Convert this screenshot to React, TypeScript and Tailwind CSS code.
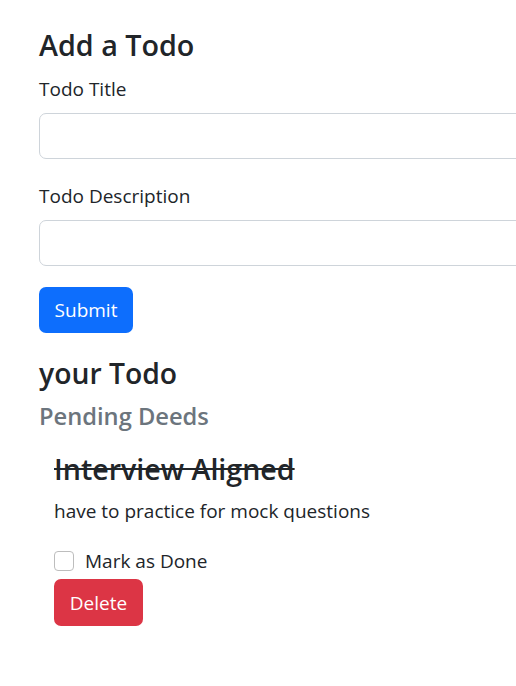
import React from "react";

export default function App() {
  const font = { fontFamily: '"Open Sans", "Noto Sans", sans-serif' };
  return (
    <div className="w-[516px] h-[686px] overflow-hidden bg-white text-[#212529]" style={font}>
      <div className="flex flex-col pl-[39px] pt-[27px]">
        <h3 className="text-[28.7px] leading-[36px] font-semibold">Add a Todo</h3>
        <label className="mt-[14px] text-[19px] leading-[24px]">Todo Title</label>
        <input className="mt-[12px] h-[46px] w-[540px] rounded-[7px] border border-[#ced4da] bg-white px-3 outline-none" />
        <label className="mt-[25px] text-[19px] leading-[24px]">Todo Description</label>
        <input className="mt-[12px] h-[46px] w-[540px] rounded-[7px] border border-[#ced4da] bg-white px-3 outline-none" />
        <div>
          <button className="mt-[21px] h-[46px] w-[94px] rounded-[7px] bg-[#0d6efd] pt-[1px] text-[19px] text-white">Submit</button>
        </div>
        <h3 className="mt-[22px] text-[28.3px] leading-[36px] font-semibold">your Todo</h3>
        <h5 className="mt-[10px] text-[23.7px] leading-[30px] font-semibold text-[#6c757d]">Pending Deeds</h5>
        <div className="flex flex-col pl-[15px]">
          <h5 className="mt-[20px] text-[28.6px] leading-[36px] font-semibold line-through">Interview Aligned</h5>
          <p className="mt-[12px] text-[19px] leading-[24px]">have to practice for mock questions</p>
          <div className="mt-[26px] flex h-[24px] items-center gap-[11px]">
            <span className="block h-[20px] w-[20px] rounded-[4px] border border-[#bdbdbd] bg-white" />
            <span className="text-[19px] leading-[24px]">Mark as Done</span>
          </div>
          <div>
            <button className="mt-[6px] h-[47px] w-[89px] rounded-[7px] bg-[#dc3545] pt-[1px] text-[19px] text-white">Delete</button>
          </div>
        </div>
      </div>
    </div>
  );
}
